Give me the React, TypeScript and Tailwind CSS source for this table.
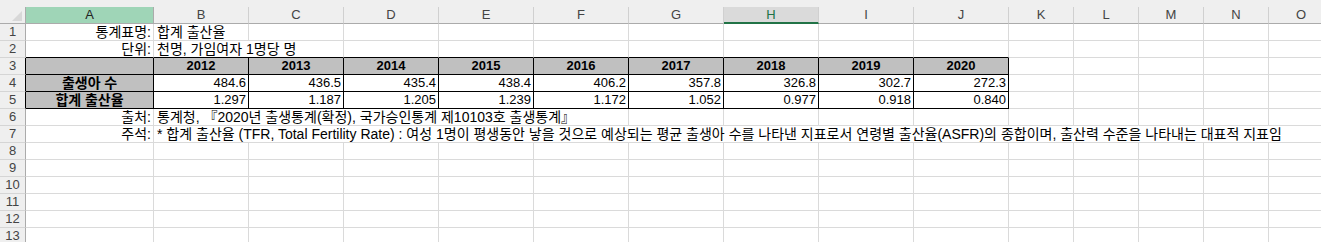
import React from "react";

const COLS = ["A", "B", "C", "D", "E", "F", "G", "H", "I", "J", "K", "L", "M", "N", "O"];
const W: Record<string, string> = {
  A: "w-[128px]",
  B: "w-[95px]",
  C: "w-[95px]",
  D: "w-[95px]",
  E: "w-[95px]",
  F: "w-[95px]",
  G: "w-[95px]",
  H: "w-[95px]",
  I: "w-[95px]",
  J: "w-[95px]",
  K: "w-[65px]",
  L: "w-[65px]",
  M: "w-[65px]",
  N: "w-[65px]",
  O: "w-[65px]",
};

const years = ["2012", "2013", "2014", "2015", "2016", "2017", "2018", "2019", "2020"];
const births = ["484.6", "436.5", "435.4", "438.4", "406.2", "357.8", "326.8", "302.7", "272.3"];
const tfr = ["1.297", "1.187", "1.205", "1.239", "1.172", "1.052", "0.977", "0.918", "0.840"];

function K({ t }: { t: string }) {
  const parts = t.split(/([\uAC00-\uD7A3\u3131-\u318E\u300E\u300F]+)/);
  return (
    <>
      {parts.map((p, i) =>
        i % 2 === 1 ? (
          <span key={i} className="text-[14px] leading-[16px]">
            {p}
          </span>
        ) : (
          <React.Fragment key={i}>{p}</React.Fragment>
        )
      )}
    </>
  );
}

function RowHead({ n, dark }: { n: number; dark?: boolean }) {
  return (
    <div
      className={
        "w-[26px] shrink-0 h-[17px] bg-[#efefef] border-b border-b-[#d5d5d5] border-r text-center text-[#444] text-[13px] leading-[16px] " +
        (dark ? "border-r-black" : "border-r-[#ababab]")
      }
    >
      {n}
    </div>
  );
}

function Grid({ w, className = "", children }: { w: string; className?: string; children?: React.ReactNode }) {
  return (
    <div
      className={
        w +
        " shrink-0 h-[17px] border-r border-b border-[#dadada] px-[2px] leading-[16px] whitespace-nowrap overflow-visible " +
        className
      }
    >
      {children}
    </div>
  );
}

function Empty({ from }: { from: number }) {
  return (
    <>
      {COLS.slice(from).map((c) => (
        <Grid key={c} w={W[c]} />
      ))}
    </>
  );
}

export default function App() {
  return (
    <div className="w-[1321px] h-[242px] overflow-hidden bg-white font-['Liberation_Sans','Noto_Sans_CJK_KR',sans-serif] text-[13px] text-black">
      {/* top strip */}
      <div className="h-[7px] bg-[#efefef]" />
      {/* column headers */}
      <div className="flex h-[17px]">
        <div className="relative w-[26px] shrink-0 h-[17px] bg-[#efefef] border-r border-b border-[#ababab]">
          <svg className="absolute left-[12px] top-[4px]" width="10" height="10" viewBox="0 0 10 10">
            <polygon points="10,0 10,10 0,10" fill="#d8d8d8" />
          </svg>
        </div>
        {COLS.map((c) => {
          const selA = c === "A";
          const selH = c === "H";
          return (
            <div
              key={c}
              className={
                W[c] +
                " shrink-0 h-[17px] border-r text-center leading-[16px] " +
                (selA
                  ? "bg-[#9fd5b7] border-r-[#ababab] border-b border-b-[#ababab] text-[#222]"
                  : selH
                  ? "bg-[#dadada] border-r-[#d0d0d0] border-b-2 border-b-[#217346] text-[#217346] leading-[15px]"
                  : "bg-[#efefef] border-r-[#d0d0d0] border-b border-b-[#ababab] text-[#444]")
              }
            >
              {c}
            </div>
          );
        })}
      </div>

      {/* row 1 */}
      <div className="flex text-[14px]">
        <RowHead n={1} />
        <Grid w={W.A} className="text-right"><K t="통계표명:" /></Grid>
        <Grid w={W.B} className="pl-[3px]"><K t="합계 출산율" /></Grid>
        <Empty from={2} />
      </div>

      {/* row 2 */}
      <div className="flex text-[14px]">
        <RowHead n={2} />
        <Grid w={W.A} className="text-right border-b-black"><K t="단위:" /></Grid>
        <Grid w="w-[190px]" className="pl-[3px] border-b-black"><K t="천명, 가임여자 1명당 명" /></Grid>
        {COLS.slice(3, 10).map((c) => (
          <Grid key={c} w={W[c]} className="border-b-black" />
        ))}
        <Empty from={10} />
      </div>

      {/* row 3 */}
      <div className="flex">
        <RowHead n={3} dark />
        <Grid w={W.A} className="bg-[#c0c0c0] border-black" />
        {years.map((y, i) => (
          <Grid key={y} w={W[COLS[i + 1]]} className="bg-[#c0c0c0] border-black text-center font-bold">
            {y}
          </Grid>
        ))}
        <Empty from={10} />
      </div>

      {/* row 4 */}
      <div className="flex">
        <RowHead n={4} dark />
        <Grid w={W.A} className="bg-[#c0c0c0] border-black text-center font-bold"><K t="출생아 수" /></Grid>
        {births.map((v, i) => (
          <Grid key={i} w={W[COLS[i + 1]]} className="border-black text-right">
            {v}
          </Grid>
        ))}
        <Empty from={10} />
      </div>

      {/* row 5 */}
      <div className="flex">
        <RowHead n={5} dark />
        <Grid w={W.A} className="bg-[#c0c0c0] border-black text-center font-bold"><K t="합계 출산율" /></Grid>
        {tfr.map((v, i) => (
          <Grid key={i} w={W[COLS[i + 1]]} className="border-black text-right">
            {v}
          </Grid>
        ))}
        <Empty from={10} />
      </div>

      {/* row 6 */}
      <div className="flex text-[14px]">
        <RowHead n={6} />
        <Grid w={W.A} className="text-right"><K t="출처:" /></Grid>
        <Grid w="w-[475px]" className="pl-[3px]">
          <K t="통계청, 『2020년 출생통계(확정), 국가승인통계 제10103호 출생통계』" />
        </Grid>
        <Empty from={6} />
      </div>

      {/* row 7 */}
      <div className="flex text-[14px]">
        <RowHead n={7} />
        <Grid w={W.A} className="text-right"><K t="주석:" /></Grid>
        <Grid w="w-[1180px]" className="pl-[3px]">
          <K t="* 합계 출산율 (TFR, Total Fertility Rate) : 여성 1명이 평생동안 낳을 것으로 예상되는 평균 출생아 수를 나타낸 지표로서 연령별 출산율(ASFR)의 종합이며, 출산력 수준을 나타내는 대표적 지표임" />
        </Grid>
      </div>

      {[8, 9, 10, 11, 12, 13].map((n) => (
        <div key={n} className="flex">
          <RowHead n={n} />
          <Empty from={0} />
        </div>
      ))}
    </div>
  );
}
